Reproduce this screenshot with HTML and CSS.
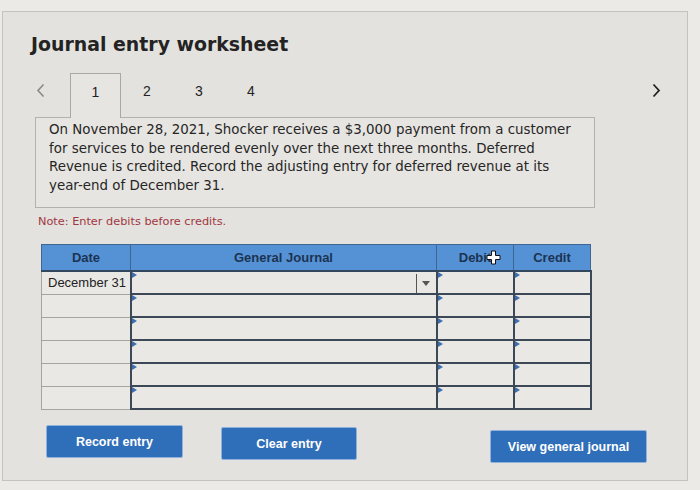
FILE: index.html
```html
<!DOCTYPE html>
<html>
<head>
<meta charset="utf-8">
<link rel="stylesheet" href="styles.css">
</head>
<body>
<div class="panel">
  <h1 class="title">Journal entry worksheet</h1>
  <div class="tabs">
    <div class="nav prev">
      <svg width="9" height="15" viewBox="0 0 9 15"><path d="M7.5 1.5 L2 7.5 L7.5 13.5" fill="none" stroke="#8a8a8a" stroke-width="1.6"/></svg>
    </div>
    <div class="tab active">1</div>
    <div class="tab">2</div>
    <div class="tab">3</div>
    <div class="tab">4</div>
    <div class="nav next">
      <svg width="9" height="15" viewBox="0 0 9 15"><path d="M1.5 1.5 L7 7.5 L1.5 13.5" fill="none" stroke="#222" stroke-width="1.8"/></svg>
    </div>
  </div>
  <div class="question">On November 28, 2021, Shocker receives a $3,000 payment from a customer for services to be rendered evenly over the next three months. Deferred Revenue is credited. Record the adjusting entry for deferred revenue at its year-end of December 31.</div>
  <div class="note">Note: Enter debits before credits.</div>
  <table class="journal">
    <thead>
      <tr>
        <th class="c-date">Date</th>
        <th class="c-gj">General Journal</th>
        <th class="c-amt">Debit<svg class="cursor" width="15" height="15" viewBox="0 0 15 15"><path d="M5.5 1 H9.5 V5.5 H14 V9.5 H9.5 V14 H5.5 V9.5 H1 V5.5 H5.5 Z" fill="#fff" stroke="#111" stroke-width="1"/></svg></th>
        <th class="c-amt">Credit</th>
      </tr>
    </thead>
    <tbody>
      <tr>
        <td class="date">December 31</td>
        <td class="inp"><span class="flag"></span><span class="dd"><span class="caret"></span></span></td>
        <td class="inp"><span class="flag"></span></td>
        <td class="inp"><span class="flag"></span></td>
      </tr>
      <tr><td class="date"></td><td class="inp"><span class="flag"></span></td><td class="inp"><span class="flag"></span></td><td class="inp"><span class="flag"></span></td></tr>
      <tr><td class="date"></td><td class="inp"><span class="flag"></span></td><td class="inp"><span class="flag"></span></td><td class="inp"><span class="flag"></span></td></tr>
      <tr><td class="date"></td><td class="inp"><span class="flag"></span></td><td class="inp"><span class="flag"></span></td><td class="inp"><span class="flag"></span></td></tr>
      <tr><td class="date"></td><td class="inp"><span class="flag"></span></td><td class="inp"><span class="flag"></span></td><td class="inp"><span class="flag"></span></td></tr>
      <tr><td class="date"></td><td class="inp"><span class="flag"></span></td><td class="inp"><span class="flag"></span></td><td class="inp"><span class="flag"></span></td></tr>
    </tbody>
  </table>
  <div class="actions">
    <button class="btn btn-record">Record entry</button>
    <button class="btn btn-clear">Clear entry</button>
    <button class="btn btn-view">View general journal</button>
  </div>
</div>
</body>
</html>
```
FILE: styles.css
```css
html, body {
  margin: 0;
  padding: 0;
}
body {
  background: #ebeae6;
  width: 700px;
  height: 490px;
  overflow: hidden;
  font-family: "DejaVu Sans", Verdana, sans-serif;
  color: #222;
}
.panel {
  box-sizing: border-box;
  margin: 11px 0 0 2px;
  width: 686px;
  height: 470px;
  border: 1px solid #c4c3bf;
  background: #e3e2de;
  padding-top: 20px;
}
.title {
  margin: 0 0 0 28px;
  font-size: 18.9px;
  line-height: 24px;
  font-weight: bold;
  color: #232323;
}
.tabs {
  display: flex;
  align-items: flex-end;
  margin: 17px 0 0 32px;
  width: 626px;
  height: 44px;
  font-family: "Liberation Sans", Arial, sans-serif;
  font-size: 14px;
  color: #222;
}
.nav {
  height: 44px;
  display: flex;
  align-items: flex-start;
  padding-top: 10px;
  box-sizing: border-box;
}
.prev {
  width: 35px;
  padding-left: 1px;
}
.next {
  margin-left: auto;
}
.tab {
  box-sizing: border-box;
  width: 52px;
  height: 44px;
  padding-top: 10px;
  line-height: 16px;
  text-align: center;
}
.tab.active {
  width: 51px;
  border: 1px solid #a9a8a4;
  border-bottom: none;
  background: #e6e5e1;
  position: relative;
  z-index: 1;
  margin-bottom: -1px;
  height: 45px;
}
.question {
  box-sizing: border-box;
  margin-left: 32px;
  width: 560px;
  height: 91px;
  border: 1px solid #b3b2ae;
  background: #e6e5e1;
  padding: 3px 8px 0 13px;
  font-size: 13.4px;
  line-height: 18.7px;
  color: #262626;
}
.note {
  margin: 7px 0 0 35px;
  font-size: 11.3px;
  line-height: 14px;
  color: #a13641;
}
.journal {
  margin: 15px 0 0 38px;
  border-collapse: collapse;
  table-layout: fixed;
  width: 545px;
  font-family: "Liberation Sans", Arial, sans-serif;
  font-size: 13px;
}
.journal th {
  height: 25px;
  padding: 0;
  background: #5592d5;
  color: #1c3352;
  font-weight: bold;
  font-size: 13px;
  border: 1px solid #3f6591;
  border-bottom: 2px solid #33475f;
  position: relative;
}
.c-date { width: 88px; }
.c-gj { width: 305px; }
.c-amt { width: 76px; }
.cursor {
  position: absolute;
  left: 49px;
  top: 5px;
}
.journal td {
  height: 21px;
  padding: 0;
  background: #e9e8e4;
  position: relative;
}
.journal td.date {
  border: 1px solid #a5a4a0;
  padding-left: 6px;
  color: #222;
  font-size: 13px;
  white-space: nowrap;
}
.journal td.inp {
  border: 2px solid #3d4856;
}
.flag {
  position: absolute;
  left: 0;
  top: 0;
  width: 0;
  height: 0;
  border-left: 5px solid #3c6eae;
  border-top: 3px solid transparent;
  border-bottom: 3px solid transparent;
}
.dd {
  position: absolute;
  right: 0;
  top: 2px;
  bottom: 0;
  width: 19px;
  border-left: 1px solid #555;
  display: flex;
  align-items: center;
  justify-content: center;
}
.caret {
  width: 0;
  height: 0;
  border-left: 4px solid transparent;
  border-right: 4px solid transparent;
  border-top: 5px solid #555;
}
.actions {
  display: flex;
  align-items: flex-start;
  margin: 16px 0 0 44px;
}
.btn {
  box-sizing: border-box;
  height: 31px;
  border: none;
  border-radius: 1px;
  background: #2f6eb8;
  color: #fff;
  font-family: "Liberation Sans", Arial, sans-serif;
  font-weight: bold;
  font-size: 12.5px;
  padding: 0;
  box-shadow: 0 0 0 1px #8fb2dc;
}
.btn-record {
  width: 135px;
}
.btn-clear {
  width: 134px;
  margin: 2px 0 0 40px;
}
.btn-view {
  width: 155px;
  margin: 5px 0 0 135px;
}
```
